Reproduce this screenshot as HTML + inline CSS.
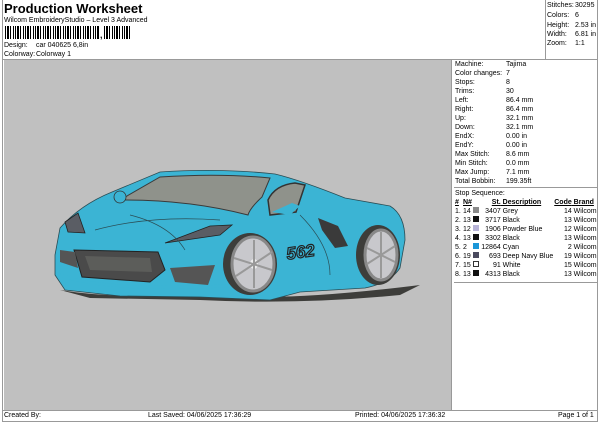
<!DOCTYPE html>
<html><head><meta charset="utf-8"><style>
*{margin:0;padding:0;box-sizing:border-box}
body{width:600px;height:424px;background:#fff;font-family:"Liberation Sans",sans-serif;color:#000;position:relative;overflow:hidden}
.a{position:absolute;white-space:nowrap;font-size:7px;line-height:9px}
.bc{position:absolute;top:26px;height:13px;background:repeating-linear-gradient(90deg,#000 0 1px,#fff 1px 2px,#000 2px 4px,#fff 4px 5px,#000 5px 6px,#fff 6px 8px,#000 8px 9px,#fff 9px 10px)}
.line{position:absolute;background:#999}
.r td{font-size:7px;line-height:9px;padding:0;white-space:nowrap}
</style></head><body>
<div class="a" style="left:4px;top:1px;font-size:13px;line-height:15px;font-weight:bold">Production Worksheet</div>
<div class="a" style="left:4px;top:16px">Wilcom EmbroideryStudio – Level 3 Advanced</div>
<div class="bc" style="left:5px;width:95px"></div>
<div class="a" style="left:100px;top:31px;font-size:9px;font-weight:bold">,</div>
<div class="bc" style="left:104px;width:26px"></div>
<div class="a" style="left:4px;top:41px">Design:</div><div class="a" style="left:36px;top:41px">car 040625 6,8in</div>
<div class="a" style="left:4px;top:50px">Colorway:</div><div class="a" style="left:36px;top:50px">Colorway 1</div>
<div class="line" style="left:545px;top:0;width:1px;height:59px"></div>
<div class="a" style="left:547px;top:1px">Stitches:</div><div class="a" style="left:575px;top:1px">30295</div>
<div class="a" style="left:547px;top:11px">Colors:</div><div class="a" style="left:575px;top:11px">6</div>
<div class="a" style="left:547px;top:21px">Height:</div><div class="a" style="left:575px;top:21px">2.53 in</div>
<div class="a" style="left:547px;top:30px">Width:</div><div class="a" style="left:575px;top:30px">6.81 in</div>
<div class="a" style="left:547px;top:39px">Zoom:</div><div class="a" style="left:575px;top:39px">1:1</div>
<div class="line" style="left:2px;top:59px;width:596px;height:1px"></div>
<div class="line" style="left:2px;top:0;width:1px;height:422px"></div>
<div class="line" style="left:597px;top:0;width:1px;height:422px"></div>
<div style="position:absolute;left:4px;top:60px;width:448px;height:350px;background:#c0c0c0;border-right:1px solid #999"></div>
<svg style="position:absolute;left:0;top:0" width="600" height="424">
<path d="M60,290 Q120,300 200,293 L240,296 Q300,300 420,285 L400,295 Q300,305 200,300 L90,298 Z" fill="#3d3d3a"/>
<path d="M55,255 L60,228 Q80,205 112,192 L160,172 Q220,168 275,174 Q300,180 345,198 L390,206 Q405,215 405,240 L400,268 Q390,283 365,288 L300,292 L270,300 L200,297 L120,296 L65,290 L55,275 Z" fill="#3bb4d4" stroke="#2a4d55" stroke-width="0.8"/>
<path d="M120,200 L160,177 Q220,173 270,178 L262,197 Q250,208 248,215 Q190,200 125,200 Z" fill="#8f928b" stroke="#3a3a3a" stroke-width="1"/>
<path d="M268,200 Q275,185 295,183 L305,185 L296,212 L270,215 Z" fill="#8f928b" stroke="#333" stroke-width="1.5"/>
<path d="M272,212 L292,203 L300,206 L290,215 Z" fill="#3bb4d4"/>
<circle cx="120" cy="197" r="6" fill="#3bb4d4" stroke="#333" stroke-width="0.8"/>
<path d="M65,222 L78,213 L85,233 L68,232 Z" fill="#5a5d64" stroke="#222" stroke-width="0.8"/>
<path d="M165,243 L210,226 L232,225 L220,235 Z" fill="#5a5d64" stroke="#222" stroke-width="0.8"/>
<path d="M318,218 L338,226 L348,246 L335,248 L322,230 Z" fill="#3a3a3a"/>
<path d="M74,250 L158,252 L165,270 L150,282 L82,277 Z" fill="#4a4a4a" stroke="#222" stroke-width="1"/>
<path d="M85,256 L150,258 L152,272 L90,270 Z" fill="#5c5d5a"/>
<path d="M60,250 L75,252 L78,268 L60,262 Z" fill="#555"/>
<path d="M170,268 L215,265 L208,285 L175,282 Z" fill="#555"/>
<path d="M60,275 Q100,290 200,287 Q240,285 280,287" fill="none" stroke="#3bb4d4" stroke-width="3"/>
<ellipse cx="250" cy="264" rx="27" ry="31" fill="#3d3d3a"/>
<ellipse cx="253" cy="264" rx="21" ry="27" fill="#c8c8cc" stroke="#888" stroke-width="3"/>
<ellipse cx="254" cy="264" rx="4" ry="5" fill="#eee"/>
<path d="M254,240 L254,288 M234,258 L272,270 M236,276 L272,252" stroke="#999" stroke-width="2"/>
<ellipse cx="378" cy="255" rx="22" ry="30" fill="#3d3d3a"/>
<ellipse cx="381" cy="255" rx="16" ry="25" fill="#c8c8cc" stroke="#888" stroke-width="3"/>
<path d="M381,232 L381,278 M367,248 L395,262 M367,264 L395,246" stroke="#999" stroke-width="2"/>
<text x="286" y="258" font-family="Liberation Sans,sans-serif" font-size="17" font-weight="bold" font-style="italic" fill="#3bb4d4" stroke="#222" stroke-width="1.2" transform="rotate(-8 298 250)">562</text>
<path d="M95,230 Q150,215 220,220 M130,215 Q170,225 185,250 M300,215 Q330,245 330,275" fill="none" stroke="#2a4d55" stroke-width="0.7"/>
</svg>
<div style="position:absolute;left:454px;top:60px;width:143px">
<table class="r" style="border-collapse:collapse;margin-left:1px">
<tr><td style="width:51px">Machine:</td><td>Tajima</td></tr>
<tr><td>Color changes:</td><td>7</td></tr>
<tr><td>Stops:</td><td>8</td></tr>
<tr><td>Trims:</td><td>30</td></tr>
<tr><td>Left:</td><td>86.4 mm</td></tr>
<tr><td>Right:</td><td>86.4 mm</td></tr>
<tr><td>Up:</td><td>32.1 mm</td></tr>
<tr><td>Down:</td><td>32.1 mm</td></tr>
<tr><td>EndX:</td><td>0.00 in</td></tr>
<tr><td>EndY:</td><td>0.00 in</td></tr>
<tr><td>Max Stitch:</td><td>8.6 mm</td></tr>
<tr><td>Min Stitch:</td><td>0.0 mm</td></tr>
<tr><td>Max Jump:</td><td>7.1 mm</td></tr>
<tr><td>Total Bobbin:</td><td>199.35ft</td></tr>
</table>
<div style="border-top:1px solid #999;margin-top:1px;padding-top:1px">
<div class="a" style="position:static;padding-left:1px">Stop Sequence:</div>
<table class="r" style="border-collapse:collapse;width:142px;margin-left:1px">
<tr style="font-weight:bold;text-decoration:underline"><td style="width:8px">#</td><td style="width:10px">N#</td><td style="width:8px"></td><td style="text-align:right">St.</td><td>&nbsp;Description</td><td style="text-align:right">Code</td><td>&nbsp;Brand</td></tr>
<tr><td>1.</td><td>14</td><td><span style="display:inline-block;width:6px;height:6px;background:#8a8a8a"></span></td><td style="text-align:right">3407</td><td>&nbsp;Grey</td><td style="text-align:right">14</td><td>&nbsp;Wilcom</td></tr>
<tr><td>2.</td><td>13</td><td><span style="display:inline-block;width:6px;height:6px;background:#111"></span></td><td style="text-align:right">3717</td><td>&nbsp;Black</td><td style="text-align:right">13</td><td>&nbsp;Wilcom</td></tr>
<tr><td>3.</td><td>12</td><td><span style="display:inline-block;width:6px;height:6px;background:#b8b4d8"></span></td><td style="text-align:right">1906</td><td>&nbsp;Powder Blue</td><td style="text-align:right">12</td><td>&nbsp;Wilcom</td></tr>
<tr><td>4.</td><td>13</td><td><span style="display:inline-block;width:6px;height:6px;background:#111"></span></td><td style="text-align:right">3302</td><td>&nbsp;Black</td><td style="text-align:right">13</td><td>&nbsp;Wilcom</td></tr>
<tr><td>5.</td><td>2</td><td><span style="display:inline-block;width:6px;height:6px;background:#1a96d8"></span></td><td style="text-align:right">12864</td><td>&nbsp;Cyan</td><td style="text-align:right">2</td><td>&nbsp;Wilcom</td></tr>
<tr><td>6.</td><td>19</td><td><span style="display:inline-block;width:6px;height:6px;background:#4a4a5e"></span></td><td style="text-align:right">693</td><td>&nbsp;Deep Navy Blue</td><td style="text-align:right">19</td><td>&nbsp;Wilcom</td></tr>
<tr><td>7.</td><td>15</td><td><span style="display:inline-block;width:6px;height:6px;border:1px solid #333;background:#fff"></span></td><td style="text-align:right">91</td><td>&nbsp;White</td><td style="text-align:right">15</td><td>&nbsp;Wilcom</td></tr>
<tr><td>8.</td><td>13</td><td><span style="display:inline-block;width:6px;height:6px;background:#111"></span></td><td style="text-align:right">4313</td><td>&nbsp;Black</td><td style="text-align:right">13</td><td>&nbsp;Wilcom</td></tr>
</table>
<div style="border-top:1px solid #999;margin-top:3px"></div>
</div>
</div>
<div class="line" style="left:2px;top:410px;width:596px;height:1px"></div>
<div class="line" style="left:2px;top:421px;width:596px;height:1px"></div>
<div class="a" style="left:4px;top:411px">Created By:</div>
<div class="a" style="left:148px;top:411px">Last Saved: 04/06/2025 17:36:29</div>
<div class="a" style="left:355px;top:411px">Printed: 04/06/2025 17:36:32</div>
<div class="a" style="left:558px;top:411px">Page 1 of 1</div>
</body></html>
